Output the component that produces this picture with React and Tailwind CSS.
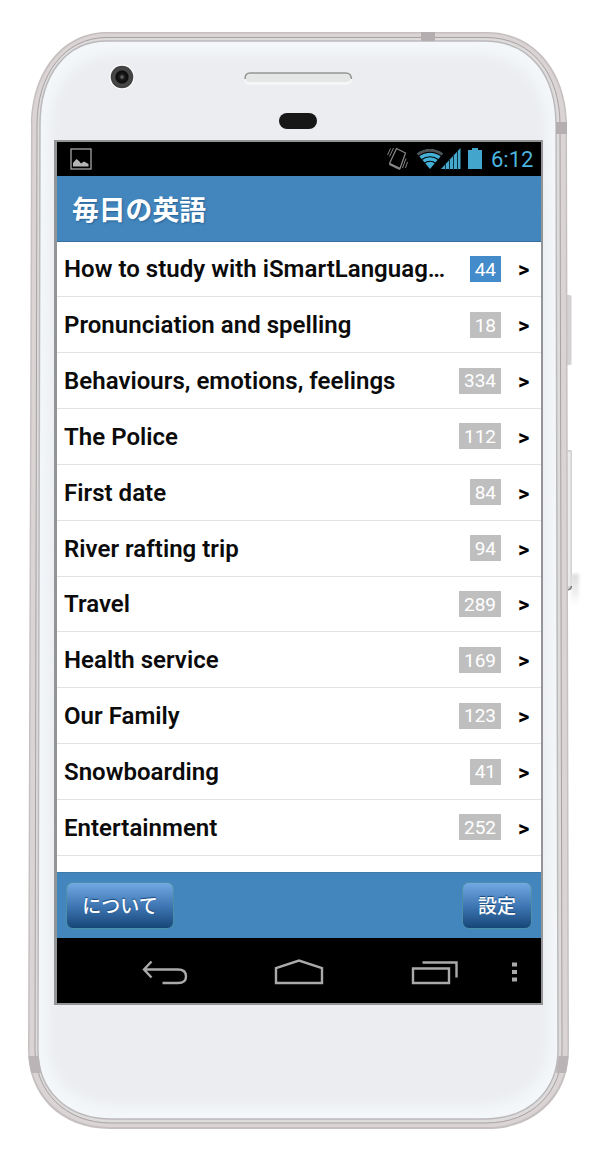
const lessons = [
  { title: "How to study with iSmartLanguag…", count: 44, active: true },
  { title: "Pronunciation and spelling", count: 18 },
  { title: "Behaviours, emotions, feelings", count: 334 },
  { title: "The Police", count: 112 },
  { title: "First date", count: 84 },
  { title: "River rafting trip", count: 94 },
  { title: "Travel", count: 289 },
  { title: "Health service", count: 169 },
  { title: "Our Family", count: 123 },
  { title: "Snowboarding", count: 41 },
  { title: "Entertainment", count: 252 },
];

// Phone body, drawn behind the screen
const PhoneFrame = () => (
  <svg
    className="absolute inset-0"
    width="600"
    height="1162"
    viewBox="0 0 600 1162"
    fill="none"
  >
    <defs>
      <filter id="soft" x="-10%" y="-10%" width="120%" height="120%">
        <feGaussianBlur stdDeviation="6" />
      </filter>
      <filter id="shade" x="-50%" y="-10%" width="200%" height="120%">
        <feGaussianBlur stdDeviation="1.5" />
      </filter>
      <clipPath id="face">
        <path d="M107 41H484C530 41 556 75 556 125L558 1050C558 1090 530 1119 484 1119H112C66 1119 38 1090 38 1050L40 125C40 75 66 41 107 41Z" />
      </clipPath>
      <radialGradient id="lens">
        <stop offset="0" stopColor="#777" />
        <stop offset="0.25" stopColor="#181818" />
        <stop offset="0.52" stopColor="#0c0c0c" />
        <stop offset="0.64" stopColor="#484848" />
        <stop offset="1" stopColor="#404040" />
      </radialGradient>
      <linearGradient id="dock" x1="0" y1="0" x2="0" y2="1">
        <stop offset="0" stopColor="#dcdcdc" />
        <stop offset="1" stopColor="#fff" />
      </linearGradient>
    </defs>

    {/* Side buttons */}
    <rect x="566" y="295" width="5.5" height="70" rx="1.5" fill="#d5d2d2" />
    <rect x="567" y="450" width="5" height="140" rx="1.5" fill="#d2d0d0" />
    <rect x="567" y="452" width="3.5" height="134" fill="#ecebeb" />
    <rect x="571" y="574" width="8" height="32" fill="url(#dock)" filter="url(#shade)" />
    <path d="M567 590Q571 590 571.5 586" stroke="#777" strokeWidth="1.5" />

    {/* Metal rim */}
    <path
      d="M107 32H487C537 32 567 75 567 125L569 1050C569 1095 537 1129 487 1129H110C60 1129 28 1095 28 1050L31 125C31 75 60 32 107 32Z"
      fill="#c6c0c1"
    />
    <path
      d="M107 33.5H487C535.500 33.5 565.500 76 565.500 125L567.5 1050C567.5 1093 535 1127 487 1127H110C62 1127 29.5 1093 29.500 1050L32.5 125C32.500 76 62 33.5 107 33.5Z"
      fill="#dad4d5"
    />
    <path
      d="M107 37.5H486C533 37.5 560 75 560 125L562 1050C562 1091 533 1123 486 1123H111C65 1123 35 1091 35 1050L37 125C37 75 64 37.5 107 37.5Z"
      fill="#dedbdb"
      stroke="#a7a1a3"
    />
    <path
      d="M107 41H484C530 41 556 75 556 125L558 1050C558 1090 530 1119 484 1119H112C66 1119 38 1090 38 1050L40 125C40 75 66 41 107 41Z"
      fill="#f4f7fa"
      stroke="#bbb9bc"
      strokeWidth="1.5"
    />
    <g clipPath="url(#face)">
      <path
        d="M112 54H480C522 54 547 88 547 130L549 1042C549 1080 520 1106 480 1106H118C76 1106 47 1080 47 1042L49 130C49 88 75 54 112 54Z"
        fill="#ebedf1"
        filter="url(#soft)"
      />
    </g>

    {/* Antenna bands */}
    <path d="M421 32h14v9h-14z" fill="#b5aeb0" />
    <path d="M556 122h11v12h-11z" fill="#b5aeb0" />
    <path d="M28.500 1056h10l2.500 17h-10z" fill="#bbb4b6" />
    <path d="M558.500 1056h10l-2.500 17h-10z" fill="#bbb4b6" />

    {/* Camera, speaker and sensor */}
    <circle cx="122" cy="77" r="12.5" fill="#fff" />
    <circle cx="122" cy="77" r="11.3" fill="url(#lens)" />
    <rect x="244" y="72" width="108" height="13" rx="6" fill="#f5f7f7" />
    <rect x="245" y="73" width="106" height="9" rx="4.5" fill="#e5e7e6" />
    <path d="M245 79Q245 73 250 73H346Q351 73 351.5 79" stroke="#929492" strokeWidth="1.5" />
    <rect x="279" y="113" width="38" height="16" rx="8" fill="#171717" />
  </svg>
);

const StatusBar = () => (
  <div className="flex h-[34px] shrink-0 items-center justify-between bg-black pl-[13px] pr-2">
    <svg width="22" height="22" viewBox="0 0 22 22" fill="none">
      <rect x="1" y="1" width="20" height="20" stroke="#a5a5a5" strokeWidth="1.3" />
      <path d="M3 18.500V15L6.500 11L9 13L11 15.500L14 13.500L18.500 16V18.500Z" fill="#b5b5b5" />
    </svg>
    <div className="flex items-center">
      {/* Vibrate, wifi, signal and battery */}
      <svg width="97" height="26" viewBox="386 146 97 26" fill="none">
        <g stroke="#858585" strokeWidth="1.3">
          <path d="M396.500 148.500L405.500 153L400 168.500L389.500 163.500Z" strokeLinejoin="round" />
          <path d="M389.500 164L400 169" strokeWidth="2.2" />
          <path d="M390.500 148.500L387.500 155M393.500 148L389.500 156.500M406 158.500L402.500 168M407.500 162L405.500 168" strokeWidth="1" />
        </g>
        <path d="M430 169L417 153.5Q430 144.5 443 153.5Z" fill="#45b0d7" />
        <path d="M417 153.5Q430 144.5 443 153.5L441 156Q430 149 419 156Z" fill="#515151" />
        <path d="M418 156.5Q430 148 442 156.5M421 160Q430 153.5 439 160M424 163.5Q430 159 436 163.5" stroke="#000" strokeWidth="1.2" />
        <path d="M441 169L460.500 148V169Z" fill="#45a9ce" />
        <path d="M445.500 163V170M449.500 159V170M453.500 154.500V170M457.500 151V170" stroke="#0b303f" strokeWidth="1" />
        <path d="M468 150H472V148H478V150H482V169H468Z" fill="#43a5cb" />
      </svg>
      <span className="ml-2 w-[42px] whitespace-nowrap pt-0.5 font-[Roboto] text-[22px] leading-none text-[#4bb4df]">
        6:12
      </span>
    </div>
  </div>
);

const LessonRow = ({ title, count, active }) => (
  <div className="flex h-[55.85px] shrink-0 items-center border-b border-[#e2e2e2] pl-[7px] pr-[11px]">
    <span className="whitespace-nowrap pt-px font-[Roboto] text-[24px] font-semibold leading-8 tracking-[0.03px] text-[#0b0b0b]">
      {title}
    </span>
    <span
      className={`ml-auto flex h-[26px] items-center px-[5px] pt-0.5 font-[Roboto] text-[19px] text-white ${
        active ? "bg-[#438bca]" : "bg-[#bfbfbf]"
      }`}
    >
      {count}
    </span>
    <span className="ml-[17px] w-3 pt-0.5 font-[Roboto] text-[22px] font-bold text-black">&gt;</span>
  </div>
);

const ActionButton = ({ children, className }) => (
  <button
    className={`flex h-[47px] items-center justify-center rounded-[7px] border border-[#4b90a6] bg-linear-to-b from-[#72a9e2] via-[#4078b5] to-[#174779] text-[19px] font-medium text-white [text-shadow:0_-1px_1px_#174779] ${className}`}
  >
    {children}
  </button>
);

const NavigationBar = () => (
  <div className="h-[65px] shrink-0 bg-black">
    <svg width="486" height="65" viewBox="57 938 486 65" fill="none" stroke="#aaa" strokeWidth="2.4">
      <path d="M151.500 961.5L144 969.5L151.500 977.5M144 969.5H178Q186 969.5 186 976.5Q186 983 178 983H162.5" />
      <path d="M276 983V968L299 960.5L322 968V983Z" />
      <path d="M413 968.5H449V983H413ZM422.5 962.5H456.5V977.5" />
      <path d="M512 962.5h5v4h-5zM512 970h5v4h-5zM512 977.5h5v4h-5z" fill="#aaa" stroke="none" />
    </svg>
  </div>
);

const App = () => {
  return (
    <div className="relative h-[1162px] w-[600px] overflow-hidden bg-white font-['Noto_Sans_CJK_JP',sans-serif]">
      <PhoneFrame />
      <div className="relative ml-[54px] pt-[140px]">
        <div className="flex h-[865px] w-[489px] flex-col overflow-hidden border-2 border-l-3 border-[#929496] bg-white">
          <StatusBar />
          <header className="flex h-[65.500px] shrink-0 items-center border-b border-[#376f9e] bg-[#4386bd] pl-[15px]">
            <h1 className="pt-0.5 text-[26.8px] font-bold leading-none text-white [text-shadow:1px_1px_2px_#286396]">
              毎日の英語
            </h1>
          </header>

          <main className="flex min-h-0 flex-1 flex-col overflow-hidden">
            {lessons.map((lesson) => (
              <LessonRow key={lesson.title} {...lesson} />
            ))}
          </main>

          <footer className="flex h-[66px] shrink-0 items-center justify-between border-t border-[#3d7aac] bg-[#4386bd] pl-[9px] pr-[9px]">
            <ActionButton className="w-[108px]">について</ActionButton>
            <ActionButton className="w-[70px]">設定</ActionButton>
          </footer>
          <NavigationBar />
        </div>
      </div>
    </div>
  );
};

export default App;
